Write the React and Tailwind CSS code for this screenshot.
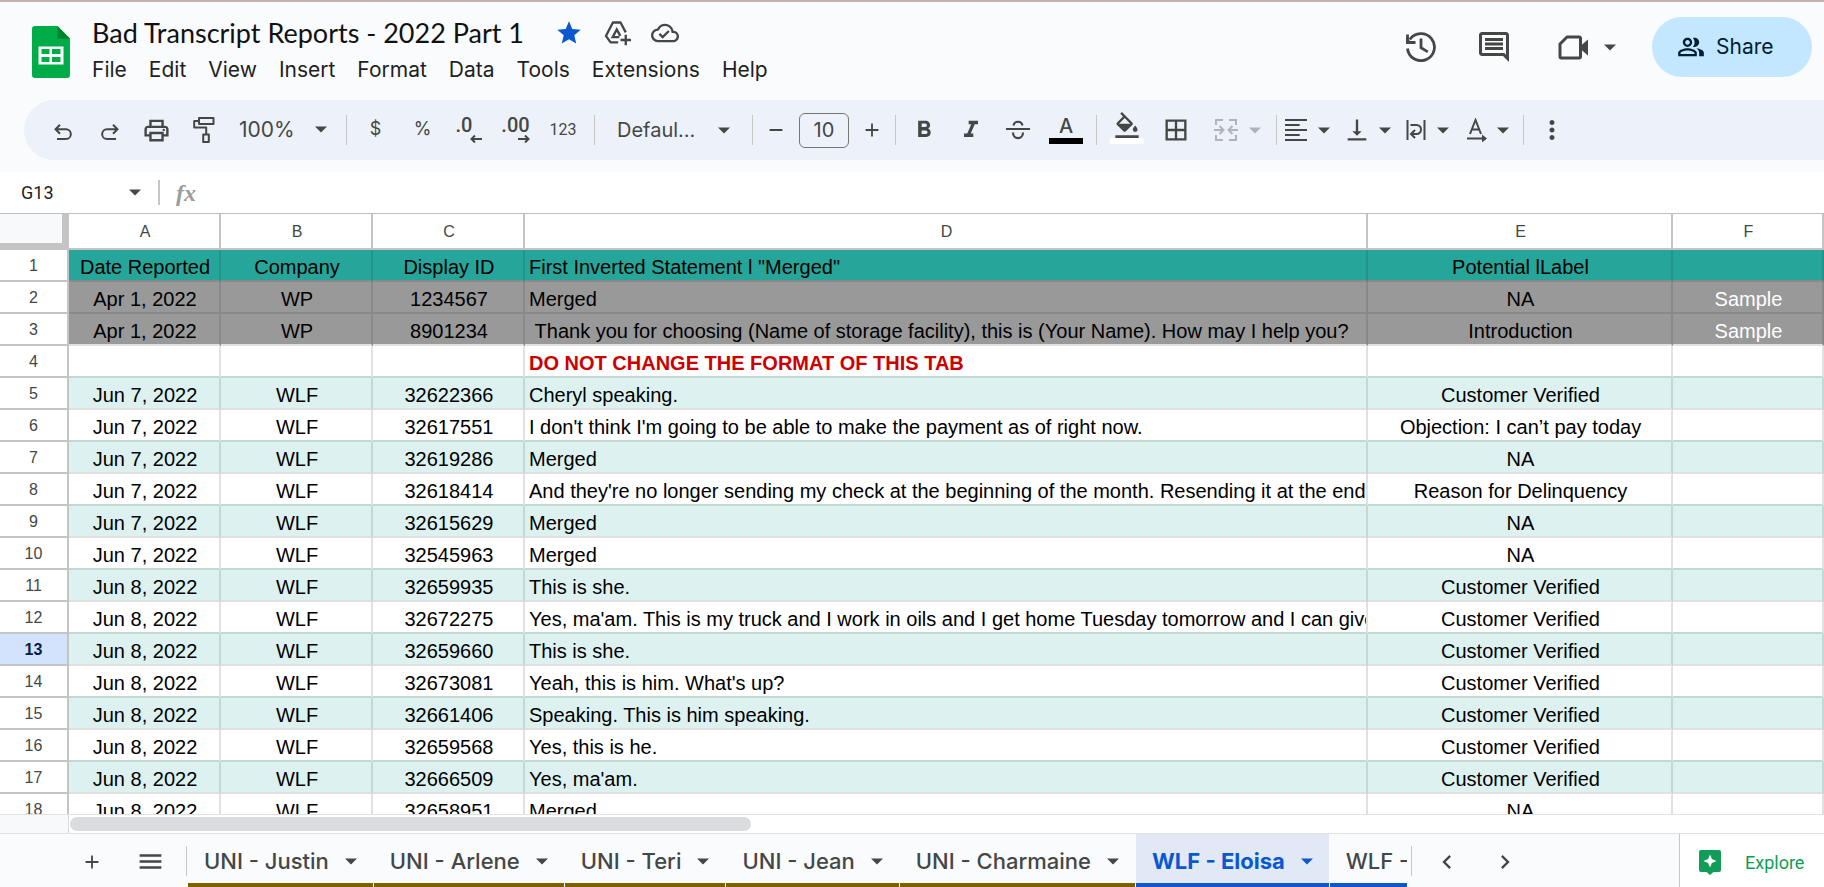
import React from "react";
import {
  MdOutlineComment,
  MdOutlinePeopleAlt,
  MdStar,
  MdOutlineCloudDone,
  MdOutlinePrint,
  MdFormatBold,
  MdFormatItalic,
  MdOutlineFormatColorFill,
  MdBorderAll,
  MdVerticalAlignBottom,
  MdMoreVert,
  MdAdd,
  MdRemove,
  MdMenu,
  MdChevronLeft,
  MdChevronRight,
} from "react-icons/md";

const UI = "font-['Inter','Noto_Sans',sans-serif]";

function Caret({ className = "" }) {
  return (
    <svg viewBox="0 0 12 7" className={`h-[7px] w-3 shrink-0 fill-current ${className}`} aria-hidden="true">
      <path d="M0 .5h12L6 6.5z" />
    </svg>
  );
}

function Stroke({ children, className = "size-6", width = 2 }) {
  return (
    <svg viewBox="0 0 24 24" className={className} fill="none" stroke="currentColor" strokeWidth={width} aria-hidden="true">
      {children}
    </svg>
  );
}

function Logo() {
  return (
    <svg viewBox="0 0 38 52" className="h-[52px] w-[38px]" role="img" aria-label="Sheets">
      <path d="M3 0h22.500L38 12.500V49a3 3 0 0 1-3 3H3a3 3 0 0 1-3-3V3a3 3 0 0 1 3-3z" fill="#00ac47" />
      <path d="M25.500 0L38 12.800H25.500z" fill="#00832d" />
      <path fillRule="evenodd" fill="#fff" d="M6.500 20.500h25v18h-25zM9.500 23v5h8v-5zM20 23v5h8.500v-5zM9.500 31v5h8v-5zM20 31v5h8.500v-5z" />
    </svg>
  );
}

function Tool({ label, className = "w-[47px]", children }) {
  return (
    <button type="button" aria-label={label} className={`flex h-11 shrink-0 items-center justify-center ${className}`}>
      {children}
    </button>
  );
}

function Divider() {
  return <span className="h-[30px] w-px shrink-0 bg-[#c4c7c5]" />;
}

function Pick({ label, value, className }) {
  return (
    <span className={`relative flex shrink-0 items-center ${className}`}>
      <select aria-label={label} className="w-full appearance-none bg-transparent outline-none">
        <option>{value}</option>
      </select>
      <Caret className="pointer-events-none absolute right-0" />
    </span>
  );
}

function ColorTool({ label, bar, children }) {
  return (
    <Tool label={label} className="w-[48px] pb-0.5">
      <span className="flex flex-col items-center">
        <span className="flex h-6 items-center">{children}</span>
        <span className={`h-1.5 w-[34px] ${bar}`} />
      </span>
    </Tool>
  );
}

const menus = ["File", "Edit", "View", "Insert", "Format", "Data", "Tools", "Extensions", "Help"];

function Header() {
  return (
    <header className="flex h-[98px] justify-between">
      <div className="flex">
        <div className="ml-8 mt-6">
          <Logo />
        </div>
        <div className="ml-[22px] mt-[11px]">
          <div className="flex h-10 items-center">
            <h1 className="font-['Lato',sans-serif] text-[27px] leading-10 text-[#111]">Bad Transcript Reports - 2022 Part 1</h1>
            <div className="ml-[31px] flex items-center gap-5 text-[#444746]">
              <button type="button" aria-label="Star" className="text-[#0b57d0]">
                <MdStar className="size-7" />
              </button>
              <button type="button" aria-label="Move">
                <Stroke className="size-7">
                  <path d="M13 20H6.500L2.500 14.500 8.500 3h6.500l4.500 8.500" strokeLinejoin="round" />
                  <path d="M14 15.500H8.300l3.500-6.500 3 5.500" />
                  <path d="M19.500 13.500v9M15 18h9" />
                </Stroke>
              </button>
              <button type="button" aria-label="Document status">
                <MdOutlineCloudDone className="size-7" />
              </button>
            </div>
          </div>
          <nav className="flex gap-[22px] text-[21px] leading-[34px] text-[#1f1f1f]">
            {menus.map((m) => (
              <button type="button" key={m}>
                {m}
              </button>
            ))}
          </nav>
        </div>
      </div>
      <div className="mr-3 mt-[15px] flex h-[60px] items-center text-[#444746]">
        <button type="button" aria-label="Version history" className="mr-10">
          <svg viewBox="0 0 30 30" className="size-[30px]" fill="none" stroke="currentColor" strokeWidth="2.800" aria-hidden="true">
            <path d="M1.500 16.500A13.500 13.500 0 1 0 3.800 7.500M1.500 2.500v8h8M15 6.500v9.200l6.800 4.200" />
            <path d="M0 11.900V5l7 6.900z" fill="currentColor" stroke="none" />
          </svg>
        </button>
        <button type="button" aria-label="Comments" className="mr-[46px]">
          <MdOutlineComment className="size-9" />
        </button>
        <button type="button" aria-label="Join a call" className="mr-9 flex items-center gap-4">
          <svg viewBox="0 0 30 25" className="h-[25px] w-[30px]" aria-hidden="true">
            <path d="M9 2h12a1.500 1.500 0 0 1 1.500 1.500v18A1.500 1.500 0 0 1 21 23H3.500A1.500 1.500 0 0 1 2 21.500V9z" fill="none" stroke="currentColor" strokeWidth="3" strokeLinejoin="round" />
            <path d="M30 4.500v16l-7-6v-4z" fill="currentColor" />
          </svg>
          <Caret />
        </button>
        <button type="button" className="flex h-[60px] w-40 items-center rounded-full bg-[#c2e7ff] pl-[25px] text-[21px] text-[#001d35]">
          <MdOutlinePeopleAlt className="mr-[11px] size-[28px]" />
          Share
        </button>
      </div>
    </header>
  );
}

function Toolbar() {
  return (
    <div role="toolbar" className="ml-6 flex h-[60px] items-center overflow-hidden rounded-l-full bg-[#edf2fa] pl-[15px] text-xl text-[#444746]">
      <Tool label="Undo">
        <svg viewBox="0 0 18 17" className="mt-1 h-[17px] w-[18px]" fill="none" stroke="currentColor" strokeWidth="2" aria-hidden="true">
          <path d="M6 .8L1.500 5.300 6 9.800M1.800 5.300H12a4.800 4.800 0 0 1 0 9.700H3" />
        </svg>
      </Tool>
      <Tool label="Redo">
        <svg viewBox="0 0 18 17" className="mt-1 h-[17px] w-[18px]" fill="none" stroke="currentColor" strokeWidth="2" aria-hidden="true">
          <path d="M12 .8l4.500 4.500L12 9.800M16.200 5.300H6A4.800 4.800 0 0 0 6 15h9" />
        </svg>
      </Tool>
      <Tool label="Print">
        <MdOutlinePrint className="size-[29px]" />
      </Tool>
      <Tool label="Paint format">
        <svg viewBox="0 0 22 26" className="h-[26px] w-[22px]" fill="none" stroke="currentColor" strokeWidth="2" aria-hidden="true">
          <path d="M6 1h14.500v6H6zM6 4H1.200v6.500h12V17M10.200 17.500h5.600V25h-5.600z" strokeLinejoin="round" />
        </svg>
      </Tool>
      <Pick label="Zoom" value="100%" className="ml-3 mr-[19px] w-[88px] text-[21px]" />
      <Divider />
      <Tool label="Format as currency" className="ml-[5px] w-[47px] pb-0.5 text-lg">$</Tool>
      <Tool label="Format as percent" className="w-[47px] pb-0.5 text-lg">%</Tool>
      <Tool label="Decrease decimal places" className="w-[46px]">
        <span className="flex flex-col items-end gap-0.5 font-['Roboto',sans-serif] text-xl font-medium leading-4">
          <span className="pr-2.5">.0</span>
          <svg viewBox="0 0 12 8" className="h-2 w-3" fill="none" stroke="currentColor" strokeWidth="2" aria-hidden="true">
            <path d="M12 4H1.500M5 .5L1.500 4 5 7.500" />
          </svg>
        </span>
      </Tool>
      <Tool label="Increase decimal places">
        <span className="flex flex-col items-end gap-0.5 font-['Roboto',sans-serif] text-xl font-medium leading-4">
          <span>.00</span>
          <svg viewBox="0 0 12 8" className="h-2 w-3" fill="none" stroke="currentColor" strokeWidth="2" aria-hidden="true">
            <path d="M0 4h10.500M7 .5L10.500 4 7 7.500" />
          </svg>
        </span>
      </Tool>
      <Tool label="More formats" className="mr-[7px] w-[48px] font-['Roboto',sans-serif] text-base">123</Tool>
      <Divider />
      <Pick label="Font" value="Defaul..." className="ml-[22px] mr-[22px] w-[113px]" />
      <Divider />
      <Tool label="Decrease font size" className="w-[46px]">
        <MdRemove className="size-[22px]" />
      </Tool>
      <input aria-label="Font size" defaultValue="10" className="h-[35px] w-[50px] shrink-0 rounded-md border border-[#747775] bg-transparent text-center" />
      <Tool label="Increase font size" className="w-[46px]">
        <MdAdd className="size-[22px]" />
      </Tool>
      <Divider />
      <Tool label="Bold" className="ml-1 w-[47px]">
        <MdFormatBold className="size-7" />
      </Tool>
      <Tool label="Italic">
        <MdFormatItalic className="size-7" />
      </Tool>
      <Tool label="Strikethrough" className="w-[48px]">
        <svg viewBox="0 0 24 20" className="h-5 w-6" fill="none" stroke="currentColor" strokeWidth="2.200" aria-hidden="true">
          <path d="M0 9h24M7.500 5.500C8.500 .5 15.500 .5 16.500 5.500M7 12.500c0 7.500 10 7.500 10 0" />
        </svg>
      </Tool>
      <ColorTool label="Text color" bar="bg-black">
        <span className="font-medium">A</span>
      </ColorTool>
      <span className="w-1.5 shrink-0" />
      <Divider />
      <span className="w-1.5 shrink-0" />
      <ColorTool label="Fill color" bar="bg-white">
        <MdOutlineFormatColorFill className="size-7" />
      </ColorTool>
      <Tool label="Borders" className="w-[50px]">
        <MdBorderAll className="size-7" />
      </Tool>
      <Tool label="Merge cells" className="w-[67px] gap-[11px] pl-1.5 text-[#b0b3b8]">
        <Stroke>
          <path d="M9 2H2v5M15 2h7v5M9 22H2v-5M15 22h7v-5M0 12h9M5.500 8L9.500 12l-4 4M24 12h-9M18.500 8L14.500 12l4 4" />
        </Stroke>
        <Caret />
      </Tool>
      <span className="w-2 shrink-0" />
      <Divider />
      <Tool label="Horizontal align" className="w-[60px] gap-[11px]">
        <Stroke className="h-[22px] w-[22px]" width={2.2}>
          <path d="M0 1.200h24M0 6.500h16M0 12h24M0 17.500h16M0 22.800h24" />
        </Stroke>
        <Caret />
      </Tool>
      <Tool label="Vertical align" className="w-[60px] gap-2">
        <MdVerticalAlignBottom className="size-7" />
        <Caret />
      </Tool>
      <Tool label="Text wrapping" className="w-[60px] gap-[11px]">
        <svg viewBox="0 0 20 22" className="h-[22px] w-5" fill="none" stroke="currentColor" strokeWidth="2" aria-hidden="true">
          <path d="M1.500 1v20M18.500 1v20M4.500 6h6a4.500 4.500 0 0 1 0 9H6M9 11l-4 4 4 4" />
        </svg>
        <Caret />
      </Tool>
      <Tool label="Text rotation" className="w-[62px] gap-2.5">
        <svg viewBox="0 0 20 24" className="h-6 w-5" fill="none" stroke="currentColor" strokeWidth="2" aria-hidden="true">
          <path d="M3 16L8.500 2 14 16M5 11.500h7M0 20.500h17" />
          <path d="M15 16.500l5 4-5 4z" fill="currentColor" stroke="none" />
        </svg>
        <Caret />
      </Tool>
      <span className="w-1 shrink-0" />
      <Divider />
      <Tool label="More" className="w-[56px]">
        <MdMoreVert className="size-[30px]" />
      </Tool>
    </div>
  );
}

function FormulaBar() {
  return (
    <div className="flex h-[42px] items-center border-b border-[#c0c0c0] bg-white pl-[21px]">
      <input aria-label="Name box" defaultValue="G13" className="w-[108px] bg-transparent font-['Roboto',sans-serif] text-lg text-[#1f1f1f] outline-none" />
      <Caret className="text-[#444746]" />
      <span className="ml-[17px] h-[25px] w-0.5 bg-[#c4c7c5]" />
      <span className="ml-4 font-['Liberation_Serif',serif] text-2xl font-bold italic leading-none text-[#9a9c9e]">fx</span>
      <input aria-label="Formula" className="ml-3 grow bg-transparent outline-none" />
    </div>
  );
}

const rows = [
  ["Date Reported", "Company", "Display ID", 'First Inverted Statement l "Merged"', "Potential lLabel", ""],
  ["Apr 1, 2022", "WP", "1234567", "Merged", "NA", "Sample"],
  ["Apr 1, 2022", "WP", "8901234", "\u00a0Thank you for choosing (Name of storage facility), this is (Your Name). How may I help you?", "Introduction", "Sample"],
  ["", "", "", "DO NOT CHANGE THE FORMAT OF THIS TAB", "", ""],
  ["Jun 7, 2022", "WLF", "32622366", "Cheryl speaking.", "Customer Verified", ""],
  ["Jun 7, 2022", "WLF", "32617551", "I don't think I'm going to be able to make the payment as of right now.", "Objection: I can’t pay today", ""],
  ["Jun 7, 2022", "WLF", "32619286", "Merged", "NA", ""],
  ["Jun 7, 2022", "WLF", "32618414", "And they're no longer sending my check at the beginning of the month. Resending it at the end", "Reason for Delinquency", ""],
  ["Jun 7, 2022", "WLF", "32615629", "Merged", "NA", ""],
  ["Jun 7, 2022", "WLF", "32545963", "Merged", "NA", ""],
  ["Jun 8, 2022", "WLF", "32659935", "This is she.", "Customer Verified", ""],
  ["Jun 8, 2022", "WLF", "32672275", "Yes, ma'am. This is my truck and I work in oils and I get home Tuesday tomorrow and I can give", "Customer Verified", ""],
  ["Jun 8, 2022", "WLF", "32659660", "This is she.", "Customer Verified", ""],
  ["Jun 8, 2022", "WLF", "32673081", "Yeah, this is him. What's up?", "Customer Verified", ""],
  ["Jun 8, 2022", "WLF", "32661406", "Speaking. This is him speaking.", "Customer Verified", ""],
  ["Jun 8, 2022", "WLF", "32659568", "Yes, this is he.", "Customer Verified", ""],
  ["Jun 8, 2022", "WLF", "32666509", "Yes, ma'am.", "Customer Verified", ""],
  ["Jun 8, 2022", "WLF", "32658951", "Merged", "NA", ""],
];

function cellStyle(n) {
  if (n === 1) return "bg-[#26a69a] border-r-[#22958a] border-b-[#898989]";
  if (n === 2) return "bg-[#999999] border-r-[#898989] border-b-[#898989]";
  if (n === 3) return "bg-[#999999] border-r-[#898989] border-b-[#e1e1e1]";
  if (n % 2) return "bg-[#ddf2f0] border-r-[#c3d7d5] border-b-[#e1e1e1]";
  return "bg-white border-r-[#e1e1e1] border-b-[#c3d7d5]";
}

function textStyle(n, i) {
  if (n === 4) return "font-bold text-[#cc0000]";
  if (i === 5) return "text-white";
  return "text-black";
}

function Grid() {
  return (
    <div className="h-[600px] overflow-hidden bg-white">
      <table className="w-full table-fixed border-separate border-spacing-0 font-['Liberation_Sans',Arial,sans-serif] text-xl leading-none">
        <colgroup>
          <col className="w-[69px]" />
          <col className="w-[152px]" />
          <col className="w-[152px]" />
          <col className="w-[152px]" />
          <col />
          <col className="w-[305px]" />
          <col className="w-[151px]" />
        </colgroup>
        <thead>
          <tr className="h-9">
            <td className="border-b-[7px] border-r-[7px] border-[#c4c4c4] bg-[#f8f9fa] p-0" />
            {["A", "B", "C", "D", "E", "F"].map((c) => (
              <th key={c} scope="col" className="border-b-2 border-r-2 border-[#c4c4c4] p-0 pl-0.5 pt-0.5 text-base font-normal leading-none text-[#444746]">
                {c}
              </th>
            ))}
          </tr>
        </thead>
        <tbody>
          {rows.map((r, idx) => {
            const n = idx + 1;
            return (
              <tr key={n} className="h-8">
                <th
                  scope="row"
                  className={`border-b-2 border-r-2 border-[#c4c4c4] p-0 pt-0.5 text-base leading-none ${n === 13 ? "bg-[#d3e3fd] font-bold text-[#041e49]" : "font-normal text-[#444746]"}`}
                >
                  {n}
                </th>
                {r.map((t, i) => (
                  <td
                    key={i}
                    className={`overflow-hidden whitespace-nowrap border-b-2 border-r-2 p-0 pt-1 ${cellStyle(n)} ${textStyle(n, i)} ${i === 3 ? "pl-1" : "pl-0.5 text-center"}`}
                  >
                    {t}
                  </td>
                ))}
              </tr>
            );
          })}
        </tbody>
      </table>
    </div>
  );
}

const tabs = ["UNI - Justin", "UNI - Arlene", "UNI - Teri", "UNI - Jean", "UNI - Charmaine"];

function SheetTabs() {
  return (
    <footer className="flex h-[53px] bg-[#f9fbfd] text-[#444746]">
      <button type="button" aria-label="Add sheet" className="ml-[68px] flex w-12 items-center justify-center pt-0.5">
        <MdAdd className="size-[22px]" />
      </button>
      <button type="button" aria-label="All sheets" className="ml-2.5 flex w-12 items-center justify-center pt-0.5">
        <MdMenu className="size-[29px]" />
      </button>
      <span className="ml-3 mr-px mt-3 h-[30px] w-px bg-[#c4c7c5]" />
      <div className="flex min-w-0 max-w-[1223px] grow overflow-hidden whitespace-nowrap text-[22px] font-medium">
        {tabs.map((t) => (
          <button type="button" key={t} className="mr-px flex shrink-0 items-center gap-4 border-b-4 border-[#7f6000] px-4 pt-1.5">
            {t}
            <Caret />
          </button>
        ))}
        <button type="button" className="mr-px flex shrink-0 items-center gap-4 border-b-4 border-[#1155cc] bg-[#e1e9f7] px-4 pt-1.5 font-bold text-[#0b57d0]">
          WLF - Eloisa
          <Caret />
        </button>
        <button type="button" className="flex w-[77px] shrink-0 items-center overflow-hidden border-b-4 border-[#1155cc] pl-4 pt-1.5">
          WLF -
        </button>
      </div>
      <span className="mt-3 h-[30px] w-px shrink-0 bg-[#c4c7c5]" />
      <button type="button" aria-label="Scroll left" className="ml-1.5 flex w-[58px] shrink-0 items-center justify-center pt-0.5">
        <MdChevronLeft className="size-7" />
      </button>
      <button type="button" aria-label="Scroll right" className="flex w-[58px] shrink-0 items-center justify-center pt-0.5">
        <MdChevronRight className="size-7" />
      </button>
      <button type="button" className="ml-auto flex w-[145px] shrink-0 items-center gap-6 border-l border-[#c4c7c5] bg-white pl-[19px] pt-1 font-['Roboto',sans-serif] text-lg text-[#0f9d58]">
        <svg viewBox="0 0 22 25" className="h-[25px] w-[22px]" aria-hidden="true">
          <path d="M2 0h18a2 2 0 0 1 2 2v18a2 2 0 0 1-2 2h-5.500L11 25l-3.500-3H2a2 2 0 0 1-2-2V2a2 2 0 0 1 2-2z" fill="#0f9d58" />
          <path d="M11 4.500l1.900 4.600L17.500 11l-4.600 1.900L11 17.500l-1.900-4.600L4.500 11l4.600-1.900z" fill="#fff" />
        </svg>
        Explore
      </button>
    </footer>
  );
}

export default function App() {
  return (
    <div className={`overflow-hidden border-t-2 border-[#c4b3af] bg-[#f9fbfd] ${UI}`}>
      <Header />
      <Toolbar />
      <div className="h-3" />
      <FormulaBar />
      <Grid />
      <div className="flex h-5 border-y border-[#e1e1e1] bg-white">
        <div className="w-[69px] border-r border-[#d9d9d9] bg-[#f8f9fa]" />
        <div className="grow py-0.5">
          <div className="ml-px h-[14px] w-[38.8%] rounded-full bg-[#dadce0]" />
        </div>
      </div>
      <SheetTabs />
    </div>
  );
}
